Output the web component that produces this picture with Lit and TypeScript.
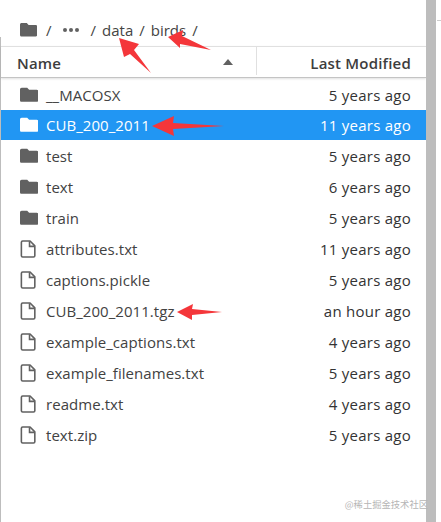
import { LitElement, html, css, svg } from "lit";
import { customElement } from "lit/decorators.js";

const folder = svg`<path d="M1.6 1.6h5.2l1.8 1.900h7.200c.9 0 1.600.7 1.600 1.600v8.200c0 .9-.7 1.600-1.600 1.600H1.600C.7 15 0 14.300 0 13.400V3.200C0 2.300.7 1.600 1.600 1.600z"/>`;
const file = svg`<path d="M2.500 1h7l4.500 4.500v9.300c0 .7-.5 1.200-1.200 1.200H2.500c-.7 0-1.200-.5-1.200-1.200V2.200C1.300 1.500 1.800 1 2.500 1z" fill="none" stroke="currentColor" stroke-width="1.500" stroke-linejoin="round"/><path d="M9 1.200v4.800h4.800" fill="none" stroke="currentColor" stroke-width="1.500"/>`;

const rows: [string, string, string, boolean?][] = [
  ["d", "__MACOSX", "5 years ago"],
  ["d", "CUB_200_2011", "11 years ago", true],
  ["d", "test", "5 years ago"],
  ["d", "text", "6 years ago"],
  ["d", "train", "5 years ago"],
  ["f", "attributes.txt", "11 years ago"],
  ["f", "captions.pickle", "5 years ago"],
  ["f", "CUB_200_2011.tgz", "an hour ago"],
  ["f", "example_captions.txt", "4 years ago"],
  ["f", "example_filenames.txt", "5 years ago"],
  ["f", "readme.txt", "4 years ago"],
  ["f", "text.zip", "5 years ago"],
];

@customElement("app-root")
export class AppRoot extends LitElement {
  static styles = css`
    :host {
      display: block;
      width: 441px;
      height: 522px;
      position: relative;
      overflow: hidden;
      background: #fff;
      font-family: "Open Sans", "Noto Sans", sans-serif;
      font-size: 15px;
      color: #333;
    }
    .shell { display: flex; height: 100%; }
    .main { width: 426px; display: flex; flex-direction: column; }
    .crumbs {
      height: 46px;
      box-sizing: border-box;
      padding: 13px 0 0 20px;
      display: flex;
      align-items: center;
      gap: 6px;
      color: #444;
    }
    .crumbs svg.f { width: 17px; height: 17px; fill: #616161; margin-right: 3px; }
    .dots { display: flex; gap: 2px; margin: 0 6px 0 5px; }
    .dots i { width: 4px; height: 4px; border-radius: 50%; background: #616161; }
    .panel { flex: 1; border-left: 1px solid #bdbdbd; margin-top: -9px; padding-top: 9px; }
    .head {
      height: 32px;
      box-sizing: border-box;
      display: flex;
      border-top: 1px solid #e0e0e0;
      border-bottom: 1px solid #c4c4c4;
      box-shadow: 0 1px 2px rgba(0,0,0,.12);
      font-weight: 600;
      letter-spacing: 0.2px;
      color: #3d3d3d;
    }
    .h-name { flex: 1; display: flex; align-items: center; justify-content: space-between; padding: 1px 23px 0 16px; }
    .tri { width: 0; height: 0; border: 5px solid transparent; border-top: 0; border-bottom: 6px solid #616161; margin-bottom: 1px; }
    .h-mod { width: 170px; box-sizing: border-box; border-left: 1px solid #e0e0e0; margin: 0 0 2px; display: flex; align-items: center; justify-content: flex-end; padding: 3px 15px 0 0; }
    .list { padding-top: 1px; }
    .row {
      height: 31px;
      display: flex;
      align-items: center;
      padding: 0 15px 0 19px;
      color: #424242;
    }
    .row.sel { background: #2196f3; color: #fff; height: 30px; }
    .row svg { width: 18px; height: 18px; flex: none; margin-right: 8px; color: #616161; fill: #616161; }
    .row.sel svg { color: #fff; fill: #fff; }
    .n { flex: 1; white-space: nowrap; letter-spacing: 0.05px; }
    .d { white-space: nowrap; color: #333; letter-spacing: 0.25px; }
    .row.sel .d { color: #fff; }
    .bar { width: 10px; background: #bdbdbd; flex: none; }
    .edge { flex: 1; border-top: 1px solid #ccc; margin-top: 20px; margin-left: 1px; }
    .arrows { position: absolute; inset: 0; pointer-events: none; }
    .wm { position: absolute; right: 13px; bottom: 11px; font-size: 9.300px; color: #b5b5b5; font-family: "Noto Sans CJK SC", sans-serif; white-space: nowrap; }
  `;

  render() {
    return html`
      <div class="shell">
        <div class="main">
          <div class="crumbs">
            <svg class="f" viewBox="0 0 17 16">${folder}</svg><span>/</span>
            <span class="dots"><i></i><i></i><i></i></span>
            <span>/</span><span>data</span><span>/</span><span>birds</span><span>/</span>
          </div>
          <div class="panel">
            <div class="head">
              <div class="h-name"><span>Name</span><span class="tri"></span></div>
              <div class="h-mod">Last Modified</div>
            </div>
            <div class="list">
              ${rows.map(([k, n, d, s]) => html`
                <div class="row ${s ? "sel" : ""}">
                  <svg viewBox="0 0 17 17">${k === "d" ? folder : file}</svg>
                  <span class="n">${n}</span><span class="d">${d}</span>
                </div>`)}
            </div>
          </div>
        </div>
        <div class="bar"></div>
        <div class="edge"></div>
      </div>
      <svg class="arrows" viewBox="0 0 441 522" fill="#f4363a">
        <polygon points="119,38 139,44 134,50 151,73 130,54 124,57"/>
        <polygon points="168,37 183,30 182,36 211,50 180,44 180,48"/>
        <polygon points="152,126 174,116 173,123 224,126 173,129 174,136"/>
        <polygon points="177,312 193,304 192,309 222,312 192,315 192,320"/>
      </svg>
      <div class="wm">@稀土掘金技术社区</div>
    `;
  }
}
